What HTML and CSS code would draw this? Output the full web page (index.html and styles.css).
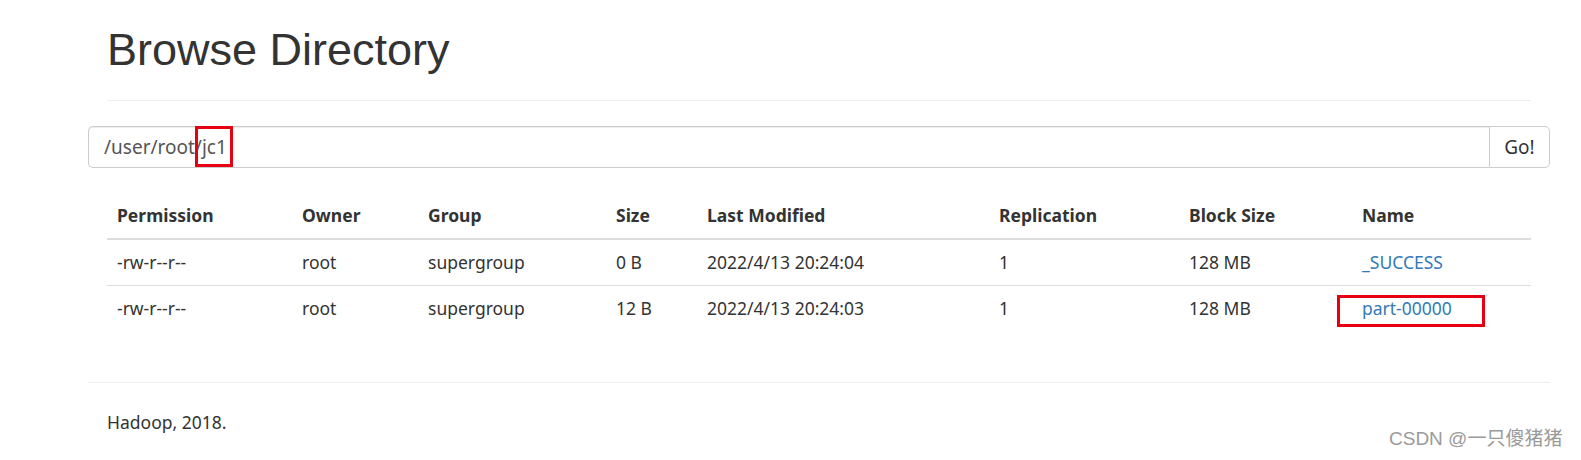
FILE: index.html
```html
<!DOCTYPE html>
<html>
<head>
<meta charset="utf-8">
<title>Browsing HDFS</title>
<link rel="stylesheet" href="styles.css">
</head>
<body>
<div class="container">
  <div class="page-header">
    <h1 class="title">Browse Directory</h1>
  </div>
  <div class="input-group">
    <div class="form-control"><span class="path">/user/root/<span class="mark">jc1</span></span></div>
    <button class="btn">Go!</button>
  </div>
  <div class="table-wrap">
    <table class="table">
      <colgroup>
        <col class="c-perm"><col class="c-owner"><col class="c-group"><col class="c-size"><col class="c-mod"><col class="c-rep"><col class="c-block"><col class="c-name">
      </colgroup>
      <thead>
        <tr><th>Permission</th><th>Owner</th><th>Group</th><th>Size</th><th>Last Modified</th><th>Replication</th><th>Block Size</th><th>Name</th></tr>
      </thead>
      <tbody>
        <tr><td>-rw-r--r--</td><td>root</td><td>supergroup</td><td>0 B</td><td>2022/4/13 20:24:04</td><td>1</td><td>128 MB</td><td><a class="link" href="#">_SUCCESS</a></td></tr>
        <tr><td>-rw-r--r--</td><td>root</td><td>supergroup</td><td>12 B</td><td>2022/4/13 20:24:03</td><td>1</td><td>128 MB</td><td><span class="name-mark"><a class="link" href="#">part-00000</a></span></td></tr>
      </tbody>
    </table>
  </div>
  <hr class="footer-rule">
  <div class="footer"><p class="footer-text">Hadoop, 2018.</p></div>
</div>
<div class="watermark">CSDN @一只傻猪猪</div>
</body>
</html>
```
FILE: styles.css
```css
html, body {
  margin: 0;
  padding: 0;
  background: #fff;
}
body {
  font-family: "Noto Sans", "Open Sans", sans-serif;
  font-size: 17.5px;
  line-height: 25px;
  color: #333;
  position: relative;
  height: 460px;
  overflow: hidden;
}
.container {
  margin-left: 88px;
  width: 1462px;
}
.page-header {
  margin: 0 19px;
  padding-top: 25px;
  padding-bottom: 25px;
  border-bottom: 1px solid #eee;
}
.title {
  margin: 0;
  font-family: "Liberation Sans", Arial, sans-serif;
  font-weight: 400;
  font-size: 45px;
  line-height: 50px;
  color: #333;
}
.input-group {
  margin-top: 25px;
  display: flex;
  height: 42px;
}
.form-control {
  flex: 1;
  box-sizing: border-box;
  height: 42px;
  border: 1px solid #ccc;
  border-right: none;
  border-radius: 5px 0 0 5px;
  box-shadow: inset 0 1px 1px rgba(0,0,0,.075);
  padding: 0 15px;
  display: flex;
  align-items: center;
  font-size: 19px;
  color: #555;
}
.path {
  position: relative;
}
.mark {
  position: relative;
}
.mark::after {
  content: "";
  position: absolute;
  left: -7px;
  top: -8px;
  width: 32px;
  height: 35px;
  border: 3px solid #e60012;
}
.btn {
  box-sizing: border-box;
  width: 61px;
  height: 42px;
  border: 1px solid #ccc;
  border-radius: 0 5px 5px 0;
  background: #fff;
  font-family: "Noto Sans", "Open Sans", sans-serif;
  font-size: 19px;
  color: #333;
  padding: 0;
}
.table-wrap {
  margin: 25px 19px 0;
}
.table {
  width: 100%;
  border-collapse: separate;
  border-spacing: 0;
  table-layout: fixed;
}
.c-perm { width: 185px; }
.c-owner { width: 126px; }
.c-group { width: 188px; }
.c-size { width: 91px; }
.c-mod { width: 292px; }
.c-rep { width: 190px; }
.c-block { width: 173px; }
.c-name { width: auto; }
.table th {
  text-align: left;
  font-weight: 700;
  padding: 10px;
  line-height: 25px;
  border-bottom: 2px solid #ddd;
}
.table td {
  padding: 10px;
  line-height: 25px;
  white-space: nowrap;
}
.table tbody tr + tr td {
  border-top: 1px solid #ddd;
}
.link {
  color: #337ab7;
  text-decoration: none;
}
.name-mark {
  position: relative;
}
.name-mark::after {
  content: "";
  position: absolute;
  left: -25px;
  top: -1px;
  width: 142px;
  height: 26px;
  border: 3px solid #e60012;
}
.footer-rule {
  margin: 51px 0 0;
  border: 0;
  border-top: 1px solid #eee;
  height: 0;
}
.footer {
  padding: 0 19px;
}
.footer-text {
  margin: 27px 0 0;
}
.watermark {
  position: absolute;
  left: 1389px;
  top: 427px;
  font-family: "Liberation Sans", "Noto Sans CJK SC", sans-serif;
  font-size: 19px;
  line-height: 24px;
  color: #9a9a9a;
  white-space: nowrap;
}
```
